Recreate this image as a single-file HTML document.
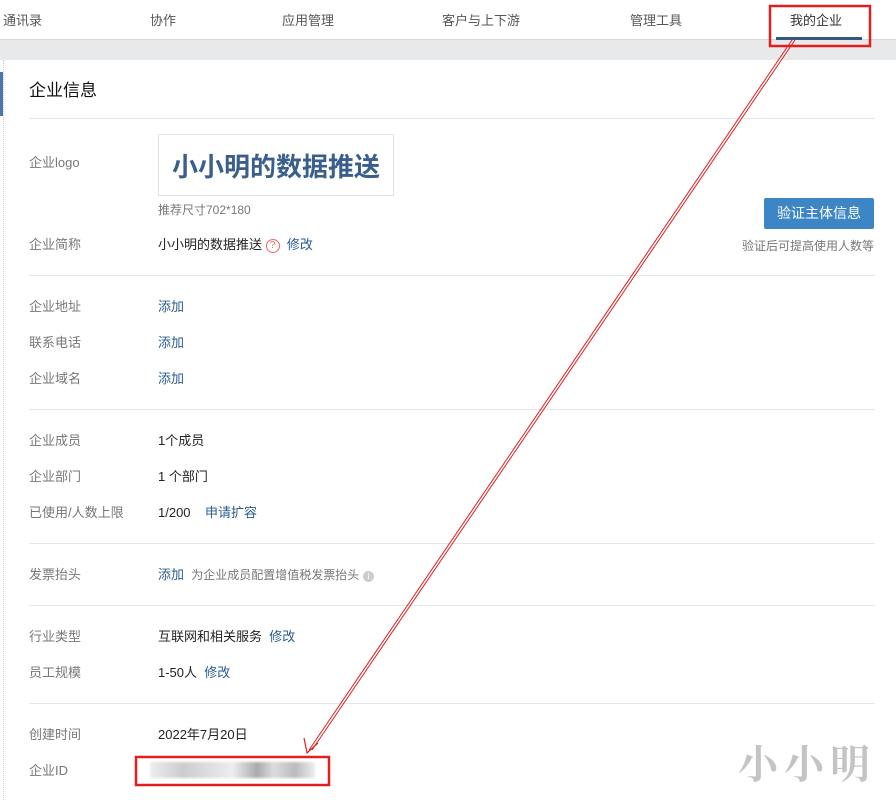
<!DOCTYPE html>
<html><head><meta charset="utf-8"><style>
*{margin:0;padding:0;box-sizing:border-box}
body{width:896px;height:800px;overflow:hidden;background:#fff;font-family:"Liberation Sans","Noto Sans CJK SC",sans-serif;font-size:13px;color:#222;position:relative}
.a{position:absolute;white-space:nowrap}
.nav{color:#555;font-size:13px;top:10px}
.lbl{left:29px;color:#777}
.val{left:158px;color:#222}
.lk{color:#2a5c8e}
.hr{position:absolute;left:29px;width:846px;height:1px;background:#e4e6e9}
</style></head><body>
<div class="a" style="left:0;top:40px;width:896px;height:20px;background:#e8e9eb"></div>
<div class="a" style="left:0;top:39px;width:896px;height:1px;background:#d8d9db"></div>
<div class="a nav" style="left:3px">通讯录</div>
<div class="a nav" style="left:150px">协作</div>
<div class="a nav" style="left:282px">应用管理</div>
<div class="a nav" style="left:442px">客户与上下游</div>
<div class="a nav" style="left:630px">管理工具</div>
<div class="a nav" style="left:790px;color:#333">我的企业</div>
<div class="a" style="left:776px;top:37px;width:86px;height:3px;background:#35567f"></div>
<div class="a" style="left:3px;top:60px;width:0;height:740px;border-left:1px dotted #ccd"></div>
<div class="a" style="left:0;top:72px;width:3px;height:44px;background:#4a77ad"></div>
<div class="a" style="left:29px;top:76px;font-size:17px;color:#111">企业信息</div>
<div class="hr" style="top:118px"></div>
<div class="a lbl" style="top:152px">企业logo</div>
<div class="a" style="left:158px;top:134px;width:236px;height:62px;border:1px solid #e2e2e2"></div>
<div class="a" style="left:172px;top:147px;font-size:26px;font-weight:bold;color:#3a5f8c">小小明的数据推送</div>
<div class="a" style="left:158px;top:201px;font-size:12px;color:#777">推荐尺寸702*180</div>
<div class="a" style="left:764px;top:198px;width:110px;height:31px;background:#3d86c6;border-radius:2px;color:#fff;font-size:14px;text-align:center;line-height:31px">验证主体信息</div>
<div class="a" style="left:742px;top:237px;font-size:12px;color:#777">验证后可提高使用人数等</div>
<div class="a lbl" style="top:234px">企业简称</div>
<div class="a val" style="top:234px">小小明的数据推送 <span style="display:inline-block;width:14px;height:14px;border:1px solid #e66;border-radius:50%;color:#e66;font-size:10px;text-align:center;line-height:12px;vertical-align:1px">?</span> &nbsp;<span class="lk">修改</span></div>
<div class="hr" style="top:275px"></div>
<div class="a lbl" style="top:296px">企业地址</div><div class="a val lk" style="top:296px">添加</div>
<div class="a lbl" style="top:332px">联系电话</div><div class="a val lk" style="top:332px">添加</div>
<div class="a lbl" style="top:368px">企业域名</div><div class="a val lk" style="top:368px">添加</div>
<div class="hr" style="top:409px"></div>
<div class="a lbl" style="top:430px">企业成员</div><div class="a val" style="top:430px">1个成员</div>
<div class="a lbl" style="top:466px">企业部门</div><div class="a val" style="top:466px">1 个部门</div>
<div class="a lbl" style="top:502px">已使用/人数上限</div><div class="a val" style="top:502px">1/200 &nbsp;&nbsp;&nbsp;<span class="lk">申请扩容</span></div>
<div class="hr" style="top:543px"></div>
<div class="a lbl" style="top:564px">发票抬头</div><div class="a val" style="top:564px"><span class="lk">添加</span> &nbsp;<span style="font-size:12px;color:#777">为企业成员配置增值税发票抬头</span> <span style="display:inline-block;width:11px;height:11px;border-radius:50%;background:#ccc;color:#fff;font-size:9px;text-align:center;line-height:11px">i</span></div>
<div class="hr" style="top:605px"></div>
<div class="a lbl" style="top:626px">行业类型</div><div class="a val" style="top:626px">互联网和相关服务 &nbsp;<span class="lk">修改</span></div>
<div class="a lbl" style="top:662px">员工规模</div><div class="a val" style="top:662px">1-50人 &nbsp;<span class="lk">修改</span></div>
<div class="hr" style="top:703px"></div>
<div class="a lbl" style="top:724px">创建时间</div><div class="a val" style="top:724px">2022年7月20日</div>
<div class="a lbl" style="top:760px">企业ID</div>
<div class="a" style="left:150px;top:762px;width:165px;height:16px;background:linear-gradient(90deg,#eee 0,#ddd 10%,#ccc 20%,#ddd 35%,#eee 50%,#aaa 65%,#ddd 75%,#bbb 88%,#eee 100%);filter:blur(1px)"></div>
<div class="a" style="left:738px;top:733px;font-size:40px;color:#c4c4c4;letter-spacing:6px;font-family:'Noto Serif CJK SC',serif;font-weight:bold">小小明</div>
<svg class="a" style="left:0;top:0" width="896" height="800">
<rect x="770" y="6" width="100" height="40" fill="none" stroke="#e02020" stroke-width="2.5"/>
<rect x="136" y="757" width="193" height="28" fill="none" stroke="#e02020" stroke-width="2.5"/>
<line x1="792" y1="40" x2="309" y2="750" stroke="#e02020" stroke-width="1"/>
<line x1="795" y1="40" x2="312" y2="750" stroke="#e02020" stroke-width="1"/>
<polyline points="304,738 307,753 318,743" fill="none" stroke="#e02020" stroke-width="1.2"/>
</svg>
</body></html>
